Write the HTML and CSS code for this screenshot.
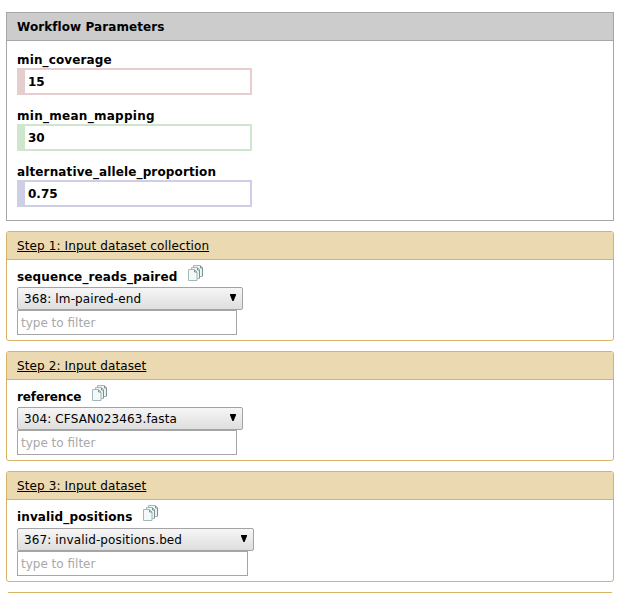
FILE: index.html
```html
<!DOCTYPE html>
<html lang="en">
<head>
<meta charset="utf-8">
<title>Workflow</title>
<link rel="stylesheet" href="styles.css">
</head>
<body>
<svg width="0" height="0" class="defs">
  <symbol id="docs" viewBox="0 0 15 16">
    <g fill="#edf4f3" stroke="#a3b8b6">
      <path d="M5.5.5h7l2 2v9h-9z"/>
      <path d="M3.500 2.500h6l2 2v9h-8z"/>
      <path d="M.5 4.500h6l2.500 2.500v8.500h-8.500z" fill="#f3f8f8"/>
      <path d="M6.500 5v2h2.500M9.500 3v2h2M12.500 1v2h2M11.500 5v8M14.500 3v8" fill="none" stroke="#78928f"/>
    </g>
  </symbol>
</svg>
<section class="params">
  <h2 class="params-title">Workflow Parameters</h2>
  <div class="params-body">
    <div class="param"><label class="label">min_coverage</label><div class="value red">15</div></div>
    <div class="param"><label class="label loose">min_mean_mapping</label><div class="value green">30</div></div>
    <div class="param"><label class="label">alternative_allele_proportion</label><div class="value blue">0.75</div></div>
  </div>
</section>
<section class="step">
  <h3 class="step-title"><span>Step 1: Input dataset collection</span></h3>
  <div class="step-body">
    <div class="row"><label class="label">sequence_reads_paired</label><svg class="icon"><use href="#docs"/></svg></div>
    <div class="select"><span>368: lm-paired-end</span><svg class="arrow" viewBox="0 0 6 7"><path d="M0 0h6v1L3.600 7H2.400L0 1z"/></svg></div>
    <input class="filter" placeholder="type to filter">
  </div>
</section>
<section class="step">
  <h3 class="step-title"><span>Step 2: Input dataset</span></h3>
  <div class="step-body">
    <div class="row"><label class="label tight">reference</label><svg class="icon"><use href="#docs"/></svg></div>
    <div class="select"><span>304: CFSAN023463.fasta</span><svg class="arrow" viewBox="0 0 6 7"><path d="M0 0h6v1L3.600 7H2.400L0 1z"/></svg></div>
    <input class="filter" placeholder="type to filter">
  </div>
</section>
<section class="step wide">
  <h3 class="step-title"><span>Step 3: Input dataset</span></h3>
  <div class="step-body">
    <div class="row"><label class="label">invalid_positions</label><svg class="icon"><use href="#docs"/></svg></div>
    <div class="select"><span>367: invalid-positions.bed</span><svg class="arrow" viewBox="0 0 6 7"><path d="M0 0h6v1L3.600 7H2.400L0 1z"/></svg></div>
    <input class="filter" placeholder="type to filter">
  </div>
</section>
<div class="next-step"></div>
</body>
</html>
```
FILE: styles.css
```css
* { box-sizing: border-box; }
body {
  margin: 0;
  padding: 12px 3px 0 6px;
  height: 593px;
  background: #fff;
  color: #000;
  font: 12px/16px "DejaVu Sans", Verdana, sans-serif;
}
.defs { display: none; }
.params { border: 1px solid #a6a6a6; height: 209px; }
.params-title {
  margin: 0;
  height: 28px;
  padding: 0 10px;
  border-bottom: 1px solid #a6a6a6;
  background: #ccc;
  font-size: 12px;
  line-height: 29px;
  letter-spacing: 0.08px;
}
.params-body { height: 179px; padding: 11px 10px 0; }
.param { height: 56px; }
.label {
  display: block;
  font-weight: bold;
  line-height: 16px;
  letter-spacing: 0.13px;
}
.loose { letter-spacing: 0.28px; }
.tight { letter-spacing: -0.1px; }
.value {
  width: 235px;
  height: 27px;
  border: 2px solid;
  border-left-width: 8px;
  padding-left: 3px;
  line-height: 25px;
  font-weight: bold;
}
.red { border-color: #e4cece; }
.green { border-color: #cee6ce; }
.blue { border-color: #cecee4; }
.step {
  height: 110px;
  margin-top: 10px;
  border: 1px solid #d8b365;
  border-radius: 3px;
  overflow: hidden;
}
.step-title {
  margin: 0;
  height: 28px;
  padding: 0 10px;
  border-bottom: 1px solid #d8b365;
  background: #ebd9b2;
  font-size: 12px;
  font-weight: normal;
  line-height: 29px;
  letter-spacing: 0.12px;
  text-decoration: underline;
}
.step-body { padding: 5px 10px 0; }
.row { display: flex; gap: 11px; height: 22px; }
.row .label { padding-top: 4px; }
.icon { width: 15px; height: 16px; }
.select {
  display: flex;
  align-items: center;
  justify-content: space-between;
  width: 226px;
  height: 23px;
  padding: 0 6px;
  border: 1px solid #a3a3a3;
  border-radius: 2px;
  background: linear-gradient(#f6f6f6, #dedede);
  letter-spacing: 0.12px;
}
.arrow { width: 6px; height: 7px; margin-top: -2px; }
.filter {
  display: block;
  width: 220px;
  height: 25px;
  padding: 0 3px;
  border: 1px solid #a6a6a6;
  border-radius: 0;
  font: inherit;
}
.filter::placeholder { color: #a9a9a9; }
.wide { height: 111px; }
.wide .row { height: 23px; }
.wide .select { width: 237px; }
.wide .filter { width: 231px; }
.next-step {
  height: 1px;
  margin: 10px 2px 0;
  background: #d8b365;
}
```
